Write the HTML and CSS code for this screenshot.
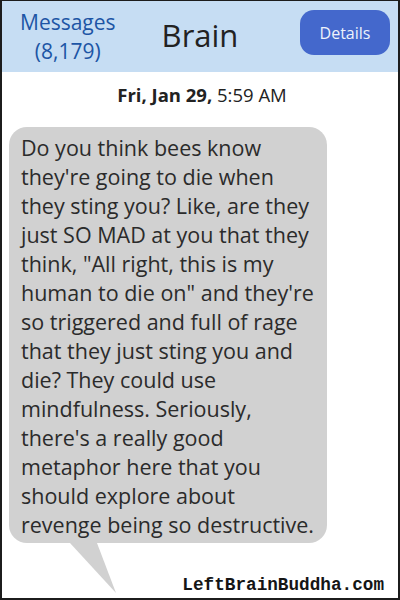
FILE: index.html
```html
<!DOCTYPE html>
<html lang="en">
<head>
<meta charset="UTF-8">
<meta name="viewport" content="width=device-width, initial-scale=1.0">
<title>Brain</title>
<link rel="stylesheet" href="styles.css">
</head>
<body>
<div class="phone">
  <div class="topbar">
    <div class="back">Messages<br>(8,179)</div>
    <div class="contact">Brain</div>
    <div class="details"><span class="details-btn">Details</span></div>
  </div>

  <div class="stamp"><b>Fri, Jan 29,</b> 5:59 AM</div>

  <div class="bubble">
    Do you think bees know they're going to die when they sting you? Like, are they just SO MAD at you that they think, "All right, this is my human to die on" and they're so triggered and full of rage that they just sting you and die? They could use mindfulness. Seriously, there's a really good metaphor here that you should explore about revenge being so destructive.
    <svg class="tail" width="50" height="52" viewBox="0 0 50 52">
      <polygon points="0,0 27,0 46,50" fill="#d1d1d1"/>
    </svg>
  </div>

  <div class="credit">LeftBrainBuddha.com</div>
</div>
</body>
</html>
```

FILE: styles.css
```css
body {
  margin: 0;
  font-family: "Open Sans", "Noto Sans", sans-serif;
  background: #fff;
}
.phone {
  width: 400px;
  height: 600px;
  box-sizing: border-box;
  border: 2px solid #1c1c1c;
  border-top-width: 1px;
  display: flex;
  flex-direction: column;
  background: #fff;
}
.topbar {
  height: 71px;
  background: #c6ddf3;
  display: grid;
  grid-template-columns: 1fr auto 1fr;
  align-items: center;
}
.back {
  justify-self: start;
  margin-left: 18px;
  text-align: center;
  color: #1d55a5;
  font-size: 21px;
  line-height: 29px;
}
.contact {
  font-size: 31px;
  color: #222;
  line-height: 40px;
  margin-top: -4px;
}
.details {
  justify-self: end;
  margin-right: 8px;
  align-self: start;
  margin-top: 9px;
}
.details-btn {
  display: flex;
  align-items: center;
  justify-content: center;
  width: 90px;
  height: 45px;
  border-radius: 14px;
  background: #4468cc;
  color: #eef2fb;
  font-size: 16px;
}
.stamp {
  text-align: center;
  font-size: 18.5px;
  line-height: 24px;
  color: #222;
  padding-top: 11px;
  padding-left: 4px;
}
.stamp b {
  font-weight: 700;
}
.bubble {
  position: relative;
  width: 318px;
  box-sizing: border-box;
  margin: 20px 0 0 7px;
  padding: 6px 11px 4px 12px;
  background: #d1d1d1;
  border-radius: 18px;
  font-size: 21.5px;
  line-height: 29px;
  color: #2b2b2b;
}
.tail {
  position: absolute;
  left: 61px;
  top: 100%;
  display: block;
}
.credit {
  margin-top: auto;
  text-align: right;
  padding: 0 14px 3px 0;
  font-family: "Liberation Mono", "DejaVu Sans Mono", monospace;
  font-size: 17.7px;
  line-height: 20px;
  font-weight: 700;
  color: #151515;
}
```
